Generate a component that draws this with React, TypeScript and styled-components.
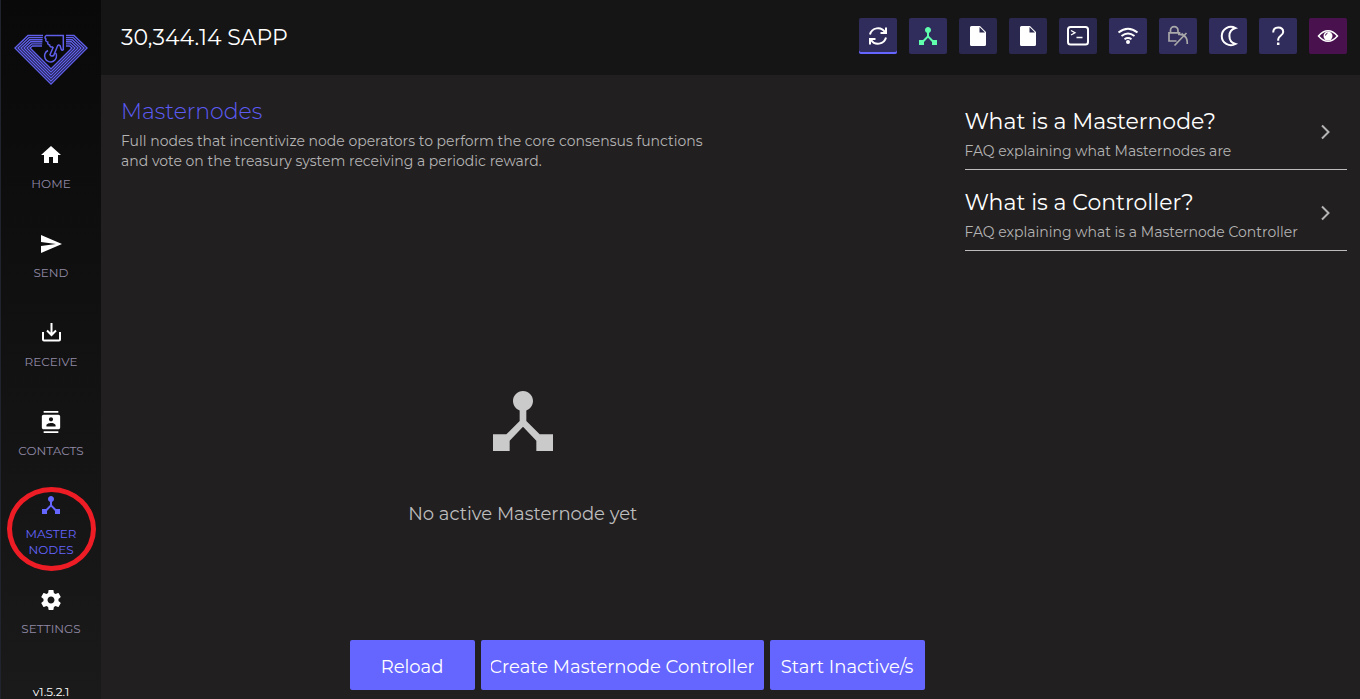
import React from "react";
import styled, { createGlobalStyle, css } from "styled-components";

const GlobalStyle = createGlobalStyle`
  *, *::before, *::after { box-sizing: border-box; }
  body {
    margin: 0;
    background: #221f20;
    color: #fff;
    font-family: Montserrat, Inter, "Open Sans", sans-serif;
    font-weight: 400;
  }
  h1, h2, p { margin: 0; }
  button { font: inherit; border: 0; cursor: pointer; }
  svg { display: block; }
`;

const Page = styled.div`
  display: flex;
  min-height: 100vh;
`;

const Sidebar = styled.aside`
  flex: 0 0 101px;
  display: flex;
  flex-direction: column;
  align-items: center;
  border-left: 1px solid #20242c;
  background: linear-gradient(#090909, #1a1a1a);
`;

const LogoLink = styled.a`
  display: block;
  padding-top: 34px;
  height: 123px;
`;

const Nav = styled.nav`
  display: flex;
  flex-direction: column;
  width: 100%;
  flex: 1;
`;

const NavItem = styled.a<{ $active?: boolean }>`
  position: relative;
  display: flex;
  flex-direction: column;
  align-items: center;
  gap: 9px;
  height: 89px;
  padding-top: 20px;
  color: #918aa6;
  font-size: 12px;
  line-height: 16px;
  text-align: center;
  text-decoration: none;
  svg { color: #fff; }
  ${(p) =>
    p.$active &&
    css`
      padding-top: 14px;
      color: #6565ff;
      svg { color: #6565ff; }
    `}
`;

const NavIcon = styled.span`
  display: flex;
  align-items: center;
  justify-content: center;
  width: 24px;
  height: 24px;
`;

const Marker = styled.span`
  position: absolute;
  top: 8px;
  left: 6px;
  width: 89px;
  height: 84px;
  border: 5px solid #ee1c25;
  border-radius: 50%;
`;

const Version = styled.div`
  height: 15px;
  font-size: 12px;
  line-height: 16px;
`;

const Main = styled.div`
  flex: 1;
  min-width: 0;
  display: flex;
  flex-direction: column;
`;

const Header = styled.header`
  display: flex;
  align-items: center;
  justify-content: space-between;
  height: 75px;
  padding: 0 13px 0 20px;
  background: #151515;
`;

const Balance = styled.div`
  font-size: 22px;
  line-height: 28px;
`;

const Toolbar = styled.div`
  display: flex;
  gap: 12px;
  padding-bottom: 3px;
`;

const ToolButton = styled.button<{ $tone?: "plain" | "eye"; $underline?: boolean; $color?: string }>`
  display: flex;
  align-items: center;
  justify-content: center;
  width: 38px;
  height: 36px;
  padding: 0;
  border-radius: 2px;
  background: ${(p) => (p.$tone === "eye" ? "#49124f" : p.$tone === "plain" ? "#2a284e" : "#302c5c")};
  color: ${(p) => p.$color || "#fff"};
  box-shadow: ${(p) => (p.$underline ? "inset 0 -2px #6565ff" : "none")};
`;

const Content = styled.div`
  flex: 1;
  display: flex;
`;

const Primary = styled.main`
  flex: 1;
  min-width: 0;
  display: flex;
  flex-direction: column;
  padding: 23px 20px 9px;
`;

const Title = styled.h1`
  color: #5c5cf5;
  font-size: 22px;
  font-weight: 300;
  line-height: 28px;
`;

const Description = styled.p`
  max-width: 600px;
  margin-top: 5px;
  color: #b4b4b4;
  font-size: 14px;
  line-height: 20px;
`;

const Empty = styled.section`
  flex: 1;
  display: flex;
  flex-direction: column;
  align-items: center;
  justify-content: center;
  gap: 41px;
  padding-bottom: 20px;
  padding-top: 115px;
  color: #bdbdbd;
  font-size: 18px;
  line-height: 24px;
  svg { color: #cacaca; }
`;

const Actions = styled.div`
  display: flex;
  justify-content: flex-end;
  gap: 6px;
`;

const ActionButton = styled.button<{ $width: number }>`
  display: flex;
  width: ${(p) => p.$width}px;
  height: 50px;
  padding: 4px 10px 0;
  border-radius: 2px;
  background: #6565ff;
  color: #fff;
`;

const ActionLabel = styled.span`
  flex: 1;
  min-width: 0;
  align-self: center;
  display: flex;
  justify-content: center;
  overflow: hidden;
  font-size: 18px;
  line-height: 24px;
  white-space: nowrap;
`;

const Faq = styled.aside`
  flex: 0 0 33%;
  padding: 14px 13px 0 20px;
`;

const FaqItem = styled.button`
  display: flex;
  align-items: center;
  justify-content: space-between;
  width: 100%;
  height: 81px;
  padding: 10px 10px 0 0;
  border-bottom: 1px solid #bcbcbc;
  background: none;
  color: #b4b4b4;
  text-align: left;
  svg { margin-bottom: 4px; }
`;

const FaqTitle = styled.span`
  display: block;
  color: #fff;
  font-size: 22px;
  line-height: 28px;
`;

const FaqText = styled.span`
  display: block;
  margin-top: 5px;
  font-size: 14px;
  line-height: 20px;
`;

const Icon = ({ d, size = 24 }: { d: string; size?: number }) => (
  <svg width={size} height={size} viewBox="0 0 24 24" fill="currentColor" aria-hidden="true">
    <path d={d} />
  </svg>
);

const HUB = "M17 16l-4-4V8.82C14.16 8.4 15 7.3 15 6c0-1.66-1.34-3-3-3S9 4.34 9 6c0 1.3.84 2.4 2 2.82V12l-4 4H3v5h5v-3.05l4-4.2 4 4.2V21h5v-5h-4z";
const HOME = "M10 20v-6h4v6h5v-8h3L12 3 2 12h3v8z";
const SEND = "M2.01 21L23 12 2.01 3 2 10l15 2-15 2z";
const CONTACTS = "M20 0H4v2h16V0zM4 24h16v-2H4v2zM20 4H4c-1.1 0-2 .9-2 2v12c0 1.1.9 2 2 2h16c1.1 0 2-.9 2-2V6c0-1.1-.9-2-2-2zm-8 2.75c1.24 0 2.25 1.01 2.25 2.25s-1.01 2.25-2.25 2.25S9.75 10.24 9.75 9 10.76 6.75 12 6.75zM17 17H7v-1.5c0-1.67 3.33-2.5 5-2.5s5 .83 5 2.5V17z";
const SETTINGS = "M19.43 12.98c.04-.32.07-.64.07-.98s-.03-.66-.07-.98l2.11-1.65c.19-.15.24-.42.12-.64l-2-3.46c-.12-.22-.39-.3-.61-.22l-2.49 1c-.52-.4-1.08-.73-1.69-.98l-.38-2.65C14.46 2.18 14.25 2 14 2h-4c-.25 0-.46.18-.49.42l-.38 2.65c-.61.25-1.17.59-1.69.98l-2.49-1c-.23-.09-.49 0-.61.22l-2 3.46c-.13.22-.07.49.12.64l2.11 1.65c-.04.32-.07.65-.07.98s.03.66.07.98l-2.11 1.65c-.19.15-.24.42-.12.64l2 3.46c.12.22.39.3.61.22l2.49-1c.52.4 1.08.73 1.69.98l.38 2.65c.03.24.24.42.49.42h4c.25 0 .46-.18.49-.42l.38-2.65c.61-.25 1.17-.59 1.69-.98l2.49 1c.23.09.49 0 .61-.22l2-3.46c.12-.22.07-.49-.12-.64l-2.11-1.65zM12 15.5c-1.93 0-3.5-1.57-3.5-3.5s1.57-3.5 3.5-3.5 3.5 1.57 3.5 3.5-1.57 3.5-3.5 3.5z";

const Line = ({ children, width = 2, size = 24 }: { children: React.ReactNode; width?: number; size?: number }) => (
  <svg width={size} height={size} viewBox="0 0 24 24" fill="none" stroke="currentColor" strokeWidth={width} aria-hidden="true">
    {children}
  </svg>
);

const Receive = () => (
  <Line>
    <path d="M4 11v7.500a1 1 0 0 0 1 1h15a1 1 0 0 0 1-1V11M12.500 2v11.500M8 9.500l4.500 4.500L17 9.500" />
  </Line>
);
const Sync = () => (
  <Line>
    <path d="M4 10.500A8.200 8.200 0 0 1 19 8.300M20 13.500A8.200 8.200 0 0 1 5 15.700M20 3.500V9h-5.500M4 20.500V15h5.500" />
  </Line>
);
const File = () => (
  <svg width="24" height="24" viewBox="0 0 24 24" aria-hidden="true">
    <path d="M5.500 2H14l6 6v12.500a1.500 1.500 0 0 1-1.500 1.500h-13A1.500 1.500 0 0 1 4 20.500v-17A1.500 1.500 0 0 1 5.500 2z" fill="#fff" />
    <path d="M13.500 3v5.500H19z" fill="#2a284e" />
  </svg>
);
const Terminal = () => (
  <Line>
    <rect x="2" y="3" width="20" height="17.500" rx="2.500" />
    <path d="M5 6.500l4 2.200L5 11M10.500 13.500h6" strokeWidth="1.300" />
  </Line>
);
const Wifi = () => (
  <Line>
    <path d="M2.500 8.500q9.500-7.500 19 0M5.500 12q6.500-5 13 0M8.500 15.300q3.500-2.500 7 0" />
    <circle cx="12" cy="18" r="2" fill="currentColor" stroke="none" />
  </Line>
);
const LockPick = () => (
  <Line width={1.700}>
    <path d="M10.500 17H3V8.800h10.500v2.500M4.500 9V6.300a3.500 3.500 0 0 1 7.500 0V9M8.500 21.500L18.500 11M12 10.500q9.500-1 9.300 9.500M15.500 9.500L20 13.500M17 12.500L20.500 9" />
  </Line>
);
const Moon = () => (
  <Line>
    <path d="M19.500 4A9.200 9.200 0 1 0 19.500 20A8.300 8.300 0 0 1 19.500 4z" />
  </Line>
);
const Question = () => (
  <Line>
    <path d="M7.200 8.500c0-3 2-5 5-5s5 1.700 5 4.500c0 3.500-5 4-5 7.300v1.500" />
    <path d="M12.200 18.500V21" strokeWidth="2.500" />
  </Line>
);
const Eye = () => (
  <Line>
    <path d="M2.500 12Q12 1.500 21.500 12Q12 22.500 2.500 12z" strokeWidth="1.500" />
    <circle cx="12" cy="12" r="4.500" fill="currentColor" stroke="none" />
    <path d="M9.500 11.500a2.600 2.600 0 0 1 2-2.300" stroke="#49124f" strokeWidth="1" />
  </Line>
);
const Chevron = () => (
  <Line width={2}>
    <path d="M9 5.500l6.500 6.500L9 18.500" />
  </Line>
);

const RINGS = [0, 1, 2, 3, 4, 5];
const Logo = () => (
  <svg width="75" height="53" viewBox="0 0 75 53" fill="none" stroke="#5f5fec" strokeWidth="1.400" aria-hidden="true">
    {RINGS.map((i) => (
      <path
        key={i}
        d={`M${29 - i * 0.200} ${1.500 + i * 2.100}H${14 + i * 0.900}L${1 + i * 3} 14L37 ${50 - i * 3}L${73 - i * 3} 14L${60 - i * 0.900} ${1.500 + i * 2.100}H52`}
      />
    ))}
    <path
      d="M32 1.500H49.300V15.500q-1 1.500-2 0L46 11.500q-1.500-1-2.500.5L39.700 21.500q-2.500 1.500-3.700-.8L39.300 13M32 1.500q-2 2 0 3.500q-1 2.500 1.700 3q-.5 2.500 2 3q0 2.500 3.500 2M34 16.500a6 6 0 1 0 7.800 2.500"
      strokeWidth="1.500"
    />
  </svg>
);

const NAV = [
  { label: "HOME", icon: <Icon d={HOME} /> },
  { label: "SEND", icon: <Icon d={SEND} /> },
  { label: "RECEIVE", icon: <Receive /> },
  { label: "CONTACTS", icon: <Icon d={CONTACTS} size={22} /> },
  { label: "MASTER NODES", icon: <Icon d={HUB} />, active: true },
  { label: "SETTINGS", icon: <Icon d={SETTINGS} /> },
];

const FAQS = [
  { title: "What is a Masternode?", text: "FAQ explaining what Masternodes are" },
  { title: "What is a Controller?", text: "FAQ explaining what is a Masternode Controller" },
];

export default function App() {
  return (
    <Page>
      <GlobalStyle />
      <Sidebar>
        <LogoLink href="#" aria-label="Sapphire">
          <Logo />
        </LogoLink>
        <Nav>
          {NAV.map(({ label, icon, active }) => (
            <NavItem key={label} href="#" $active={active}>
              <NavIcon>{icon}</NavIcon>
              <span>
                {label.split(" ").map((word, i) => (
                  <React.Fragment key={word}>
                    {i > 0 && <br />}
                    {word}
                  </React.Fragment>
                ))}
              </span>
              {active && <Marker />}
            </NavItem>
          ))}
        </Nav>
        <Version>v1.5.2.1</Version>
      </Sidebar>
      <Main>
        <Header>
          <Balance>30,344.14 SAPP</Balance>
          <Toolbar>
            <ToolButton aria-label="Synchronise" $underline><Sync /></ToolButton>
            <ToolButton aria-label="Masternodes" $color="#5fffae"><Icon d={HUB} /></ToolButton>
            <ToolButton aria-label="Open log" $tone="plain"><File /></ToolButton>
            <ToolButton aria-label="Open configuration" $tone="plain"><File /></ToolButton>
            <ToolButton aria-label="Console" $tone="plain"><Terminal /></ToolButton>
            <ToolButton aria-label="Network"><Wifi /></ToolButton>
            <ToolButton aria-label="Staking lock" $color="#a9a9a9"><LockPick /></ToolButton>
            <ToolButton aria-label="Theme"><Moon /></ToolButton>
            <ToolButton aria-label="Help"><Question /></ToolButton>
            <ToolButton aria-label="Hide balance" $tone="eye"><Eye /></ToolButton>
          </Toolbar>
        </Header>
        <Content>
          <Primary>
            <Title>Masternodes</Title>
            <Description>
              Full nodes that incentivize node operators to perform the core consensus functions
              and vote on the treasury system receiving a periodic reward.
            </Description>
            <Empty>
              <Icon d={HUB} size={80} />
              <p>No active Masternode yet</p>
            </Empty>
            <Actions>
              <ActionButton $width={125}><ActionLabel>Reload</ActionLabel></ActionButton>
              <ActionButton $width={283}><ActionLabel>Create Masternode Controller</ActionLabel></ActionButton>
              <ActionButton $width={155}><ActionLabel>Start Inactive/s</ActionLabel></ActionButton>
            </Actions>
          </Primary>
          <Faq>
            {FAQS.map(({ title, text }) => (
              <FaqItem key={title}>
                <span>
                  <FaqTitle>{title}</FaqTitle>
                  <FaqText>{text}</FaqText>
                </span>
                <Chevron />
              </FaqItem>
            ))}
          </Faq>
        </Content>
      </Main>
    </Page>
  );
}
